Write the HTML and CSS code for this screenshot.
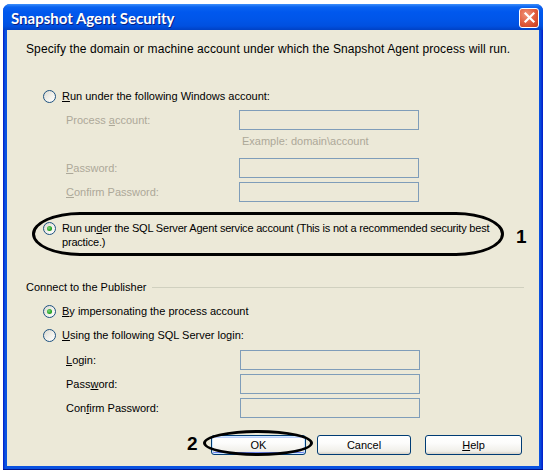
FILE: index.html
```html
<!DOCTYPE html>
<html>
<head>
<meta charset="utf-8">
<link rel="stylesheet" href="styles.css">
</head>
<body>
<div class="window">
  <div class="titlebar">
    <span class="title">Snapshot Agent Security</span>
    <span class="close"><svg width="13" height="13" viewBox="0 0 13 13"><path d="M2.5 2.5 L10.5 10.5 M10.5 2.5 L2.5 10.5" stroke="#fff" stroke-width="2.2" stroke-linecap="square"/></svg></span>
  </div>
  <div class="client">
    <p class="intro">Specify the domain or machine account under which the Snapshot Agent process will run.</p>

    <div class="radio-row r1"><span class="radio"></span><span><u>R</u>un under the following Windows account:</span></div>
    <div class="field f1 disabled"><span class="flabel">Process <u>a</u>ccount:</span><span class="input"></span></div>
    <div class="example disabled">Example: domain\account</div>
    <div class="field f2 disabled"><span class="flabel"><u>P</u>assword:</span><span class="input"></span></div>
    <div class="field f3 disabled"><span class="flabel"><u>C</u>onfirm Password:</span><span class="input"></span></div>

    <div class="radio-row r2"><span class="radio checked"></span><span class="wrap-label"><span class="line">Run un<u>d</u>er the SQL Server Agent service account (This is not a recommended security best</span><span class="line">practice.)</span></span></div>

    <div class="group-head"><span>Connect to the Publisher</span><span class="rule"></span></div>
    <div class="radio-row r3"><span class="radio checked"></span><span><u>B</u>y impersonating the process account</span></div>
    <div class="radio-row r4"><span class="radio"></span><span><u>U</u>sing the following SQL Server login:</span></div>
    <div class="field f4"><span class="flabel"><u>L</u>ogin:</span><span class="input"></span></div>
    <div class="field f5"><span class="flabel">Pass<u>w</u>ord:</span><span class="input"></span></div>
    <div class="field f6"><span class="flabel">Con<u>f</u>irm Password:</span><span class="input"></span></div>

    <div class="buttons">
      <button class="btn ok default">OK</button>
      <button class="btn cancel">Cancel</button>
      <button class="btn help"><u>H</u>elp</button>
    </div>

    <div class="callout callout-1"></div>
    <div class="num num-1">1</div>
    <div class="callout callout-2"></div>
    <div class="num num-2">2</div>
  </div>
</div>
</body>
</html>
```
FILE: styles.css
```css
html, body {
  margin: 0;
  padding: 0;
  background: #ffffff;
}
body {
  font-family: "Liberation Sans", Arial, sans-serif;
  font-size: 11px;
  color: #000;
}
.window {
  margin: 4px 0 0 3px;
  width: 540px;
  background: linear-gradient(to right, #0019c8 0, #0a52e0 2px, #0a52e0 537px, #0019c8 540px);
  border-radius: 7px 7px 0 0;
  padding-bottom: 4px;
  box-shadow: inset 0 -1px 0 #00138c;
}
.titlebar {
  height: 26px;
  border-radius: 7px 7px 0 0;
  background: linear-gradient(to bottom, #3d8ffb 0, #0a63f0 3px, #0058ee 8px, #0055e8 16px, #0050e0 22px, #0041c4 26px);
  display: flex;
  align-items: center;
  justify-content: space-between;
  padding: 0 4px 0 8px;
}
.title {
  color: #fff;
  font-family: Lato, "DejaVu Sans", sans-serif;
  font-weight: bold;
  font-size: 15px;
  text-shadow: 1px 1px 0 #0a1e80;
  padding-top: 1px;
}
.close {
  width: 20px;
  height: 20px;
  box-sizing: border-box;
  border: 1px solid #fff;
  border-radius: 3px;
  background: radial-gradient(circle at 35% 30%, #f0937a 0, #e05a3a 55%, #c2391c 100%);
  display: flex;
  align-items: center;
  justify-content: center;
  margin-top: 1px;
}
.client {
  position: relative;
  margin: 0 4px;
  height: 436px;
  background: #ece9d8;
  padding-top: 12px;
  box-sizing: border-box;
}
.intro {
  margin: 0 0 0 19px;
  height: 14px;
  line-height: 14px;
  font-size: 12px;
  letter-spacing: 0.1px;
}
.radio-row {
  display: flex;
  align-items: flex-start;
  padding-left: 36px;
  line-height: 14px;
}
.radio-row > span:last-child {
  margin-left: 6px;
}
.radio {
  position: relative;
  flex: none;
  width: 13px;
  height: 13px;
  box-sizing: border-box;
  border: 1px solid #1c5180;
  border-radius: 50%;
  background: linear-gradient(135deg, #dcdad0 0%, #f4f3ee 60%, #ffffff 100%);
}
.radio.checked::after {
  content: "";
  position: absolute;
  left: 3px;
  top: 3px;
  width: 5px;
  height: 5px;
  border-radius: 50%;
  background: radial-gradient(circle at 40% 40%, #7fd87f 0, #21a121 60%, #138a13 100%);
}
.r1 { margin-top: 32px; height: 16px; align-items: center; }
.r2 { margin-top: 19px; }
.r2 .radio { margin-top: 1px; }
.r3 { margin-top: 9px; height: 16px; align-items: center; }
.r4 { margin-top: 8px; height: 16px; align-items: center; }
.wrap-label { letter-spacing: -0.2px; }
.line { display: block; white-space: nowrap; }
.field {
  display: grid;
  grid-template-columns: 173px 180px;
  align-items: center;
  padding-left: 59px;
  height: 20px;
}
.input {
  display: block;
  height: 20px;
  box-sizing: border-box;
  border: 1px solid #7f9db9;
  background: #ece9d8;
}
.disabled { color: #aca899; }
.f1 { margin-top: 6px; }
.example {
  margin: 4px 0 0 235px;
  height: 14px;
  line-height: 14px;
}
.f2 { margin-top: 10px; }
.f3 { margin-top: 4px; }
.group-head {
  display: flex;
  align-items: center;
  margin: 31px 15px 0 19px;
  height: 14px;
  line-height: 14px;
}
.rule {
  flex: 1;
  height: 0;
  border-top: 1px solid #d0d0bf;
  margin-left: 6px;
}
.f4 { margin-top: 7px; grid-template-columns: 174px 180px; }
.f5 { margin-top: 4px; grid-template-columns: 174px 180px; }
.f6 { margin-top: 4px; grid-template-columns: 174px 180px; }
.buttons {
  display: flex;
  justify-content: flex-end;
  margin: 17px 17px 0 0;
}
.btn {
  height: 20px;
  box-sizing: border-box;
  border: 1px solid #003c74;
  border-radius: 3px;
  background: linear-gradient(to bottom, #ffffff 0, #fcfcfb 40%, #f0efe9 85%, #d6d0c5 100%);
  font-family: "Liberation Sans", Arial, sans-serif;
  font-size: 11px;
  color: #000;
  padding: 0;
}
.ok { width: 95px; }
.cancel { width: 94px; margin-left: 11px; }
.help { width: 97px; margin-left: 14px; }
.btn.default {
  box-shadow: inset 0 0 0 1px #cee7ff, inset 0 -1px 0 1px #6982ee, inset 0 1px 0 1px #bccffc;
}
.callout {
  position: absolute;
  border: 3px solid #000;
  border-radius: 50%;
}
.callout-1 {
  left: 25px;
  top: 182px;
  width: 466px;
  height: 38px;
  border-radius: 48px / 22px;
}
.callout-2 {
  left: 196px;
  top: 400px;
  width: 104px;
  height: 20px;
}
.num {
  position: absolute;
  font-family: "Liberation Sans", Arial, sans-serif;
  font-weight: bold;
  font-size: 19px;
  line-height: 20px;
}
.num-1 { left: 509px; top: 197px; }
.num-2 { left: 180px; top: 404px; }
```
